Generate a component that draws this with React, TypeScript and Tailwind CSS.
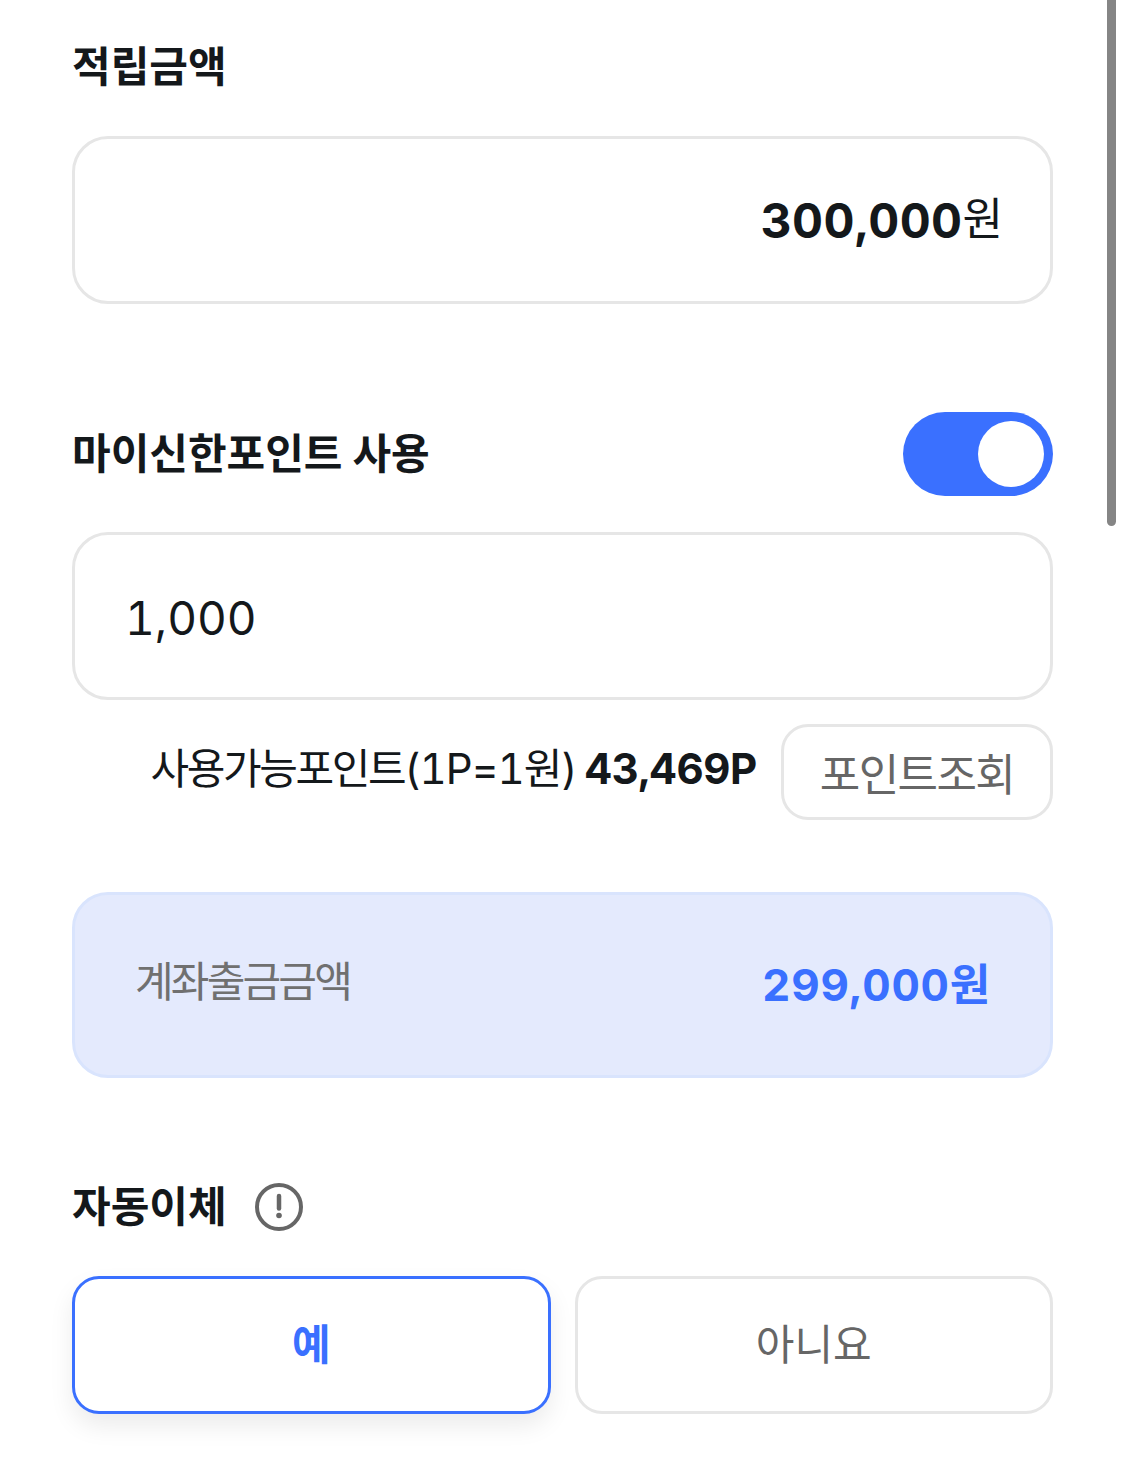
const fontStack = "font-['Inter','Noto_Sans_CJK_KR',sans-serif]";

function SectionTitle({ children }: { children: React.ReactNode }): React.JSX.Element {
  return (
    <h2 className="text-[42px] leading-[48px] font-bold text-[#14181b]">
      {children}
    </h2>
  );
}

function InfoIcon(): React.JSX.Element {
  return (
    <svg width="48" height="48" viewBox="0 0 48 48" fill="none">
      <circle cx="24" cy="24" r="22" stroke="#666666" strokeWidth="4" />
      <path d="M24 13V25.5" stroke="#666666" strokeWidth="4.5" strokeLinecap="round" />
      <circle cx="24" cy="32.5" r="2.8" fill="#666666" />
    </svg>
  );
}

export default function App(): React.JSX.Element {
  return (
    <div className={`relative h-[1477px] w-[1125px] overflow-hidden bg-white ${fontStack}`}>
      {/* Scrollbar */}
      <div className="absolute top-0 right-[9px] h-[526px] w-[9px] rounded-b-full bg-[#858585]" />

      <div className="flex w-[1053px] flex-col pt-[43px] pl-[72px]">
        {/* Deposit amount */}
        <SectionTitle>적립금액</SectionTitle>
        <div className="mt-[45px] flex h-[168px] items-center justify-end rounded-[36px] border-[3px] border-[#e6e6e6] pr-[47px]">
          <span className="mt-[2px] text-[48px] leading-none font-bold tracking-[0.4px] text-[#14181b] tabular-nums">300,000</span>
          <span className="-mt-[3px] text-[44px] leading-none text-[#14181b]">원</span>
        </div>

        {/* Points */}
        <div className="mt-[108px] flex h-[84px] items-center justify-between">
          <SectionTitle>마이신한포인트 사용</SectionTitle>
          <div className="flex h-[84px] w-[150px] items-center justify-end rounded-full bg-[#3a70ff] pr-[9px]">
            <div className="h-[66px] w-[66px] rounded-full bg-white" />
          </div>
        </div>
        <div className="mt-[36px] flex h-[168px] items-center rounded-[36px] border-[3px] border-[#e6e6e6] pl-[50px]">
          <span className="mt-[4px] text-[46px] leading-none text-[#14181b] tabular-nums">1,000</span>
        </div>
        <div className="mt-[24px] flex items-center justify-end">
          <span className="-mt-[6px] text-[42px] leading-none text-[#14181b] tabular-nums">
            <span className="tracking-[-2.4px]">사용가능포인트</span>
            <span className="tracking-[-1.1px]">(1P=1원)</span>{" "}
            <span className="-ml-[3px] font-bold tracking-[-0.3px]">43,469P</span>
          </span>
          <button className="ml-[24px] flex h-[96px] w-[272px] items-center justify-center rounded-[27px] border-[3px] border-[#e6e6e6] pt-[6px] text-[44px] leading-none tracking-[-1.6px] text-[#666666]">
            포인트조회
          </button>
        </div>

        {/* Withdrawal amount */}
        <div className="mt-[72px] flex h-[186px] items-center justify-between rounded-[36px] border-[3px] border-[#d9e4fd] bg-[#e4eafd] pr-[59px] pl-[60px]">
          <span className="-mt-[6px] text-[42px] leading-none tracking-[-2.8px] text-[#707070]">계좌출금금액</span>
          <span className="text-[44px] leading-none font-bold tracking-[0.75px] text-[#3a70ff] tabular-nums">299,000원</span>
        </div>

        {/* Auto transfer */}
        <div className="mt-[105px] flex h-[48px] items-center gap-[28px]">
          <SectionTitle>자동이체</SectionTitle>
          <InfoIcon />
        </div>
        <div className="mt-[45px] grid grid-cols-2 gap-[24px]">
          <button className="flex h-[138px] items-center justify-center rounded-[27px] border-[3px] border-[#3a70ff] bg-white text-[42px] leading-none font-bold text-[#3a70ff] shadow-[0_12px_24px_rgba(0,0,0,0.08)]">
            예
          </button>
          <button className="flex h-[138px] items-center justify-center rounded-[27px] border-[3px] border-[#e6e6e6] bg-white text-[42px] leading-none text-[#666666]">
            아니요
          </button>
        </div>
      </div>
    </div>
  );
}
